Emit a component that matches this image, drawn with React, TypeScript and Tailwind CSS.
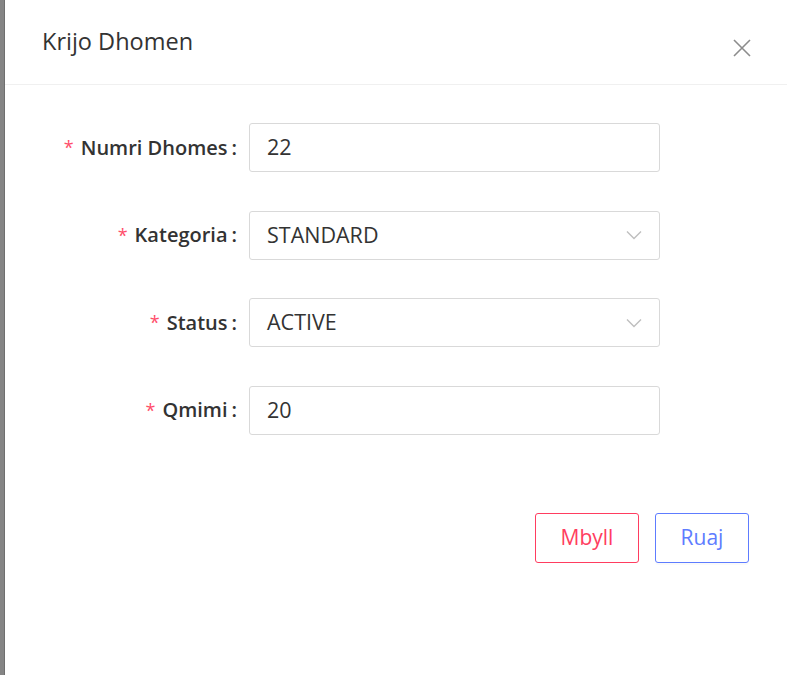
import React, { FC } from 'react';

type Field = {
  label: string;
  value: string;
  select?: boolean;
};

const fields: Field[] = [
  { label: 'Numri Dhomes', value: '22' },
  { label: 'Kategoria', value: 'STANDARD', select: true },
  { label: 'Status', value: 'ACTIVE', select: true },
  { label: 'Qmimi', value: '20' },
];

const Chevron: FC = () => (
  <svg width="16" height="10" viewBox="0 0 16 10" fill="none" className="text-[#bfbfbf]">
    <path d="M1 1.5 L8 8.5 L15 1.5" stroke="currentColor" strokeWidth="1.4" />
  </svg>
);

const CloseIcon: FC = () => (
  <svg width="20" height="20" viewBox="0 0 20 20" fill="none" className="text-[#8c8c8c]">
    <path d="M2 2 L18 18 M18 2 L2 18" stroke="currentColor" strokeWidth="1.6" />
  </svg>
);

const App: FC = () => {
  return (
    <div className="flex h-[675px] w-[787px] overflow-hidden bg-white font-['Open_Sans','Noto_Sans',sans-serif]">
      <div className="w-[5px] shrink-0 border-r border-[#6f6f6f] bg-[#858585]" />
      <div className="flex flex-1 flex-col bg-white">
        <div className="flex h-[85px] items-center justify-between border-b border-[#f0f0f0] pl-[37px] pr-[35px]">
          <h2 className="text-[23.5px] text-[#333]">Krijo Dhomen</h2>
          <button className="mt-[12px]">
            <CloseIcon />
          </button>
        </div>

        <div className="flex flex-col gap-[38.5px] pt-[38px]">
          {fields.map((field) => (
            <div key={field.label} className="flex h-[49px] items-center">
              <label className="flex w-[244px] shrink-0 items-center justify-end pr-[12px] text-[20px] font-semibold text-[#333]">
                <span className="mr-[7px] text-[18px] font-normal text-[#ff4d6a]">*</span>
                {field.label}
                <span className="ml-[4px]">:</span>
              </label>
              <div className="flex h-[49px] w-[411px] items-center justify-between rounded-[3px] border border-[#d9d9d9] pl-[17px] pr-[17px] text-[21.5px] text-[#333]">
                <span>{field.value}</span>
                {field.select && <Chevron />}
              </div>
            </div>
          ))}
        </div>

        <div className="mt-[78px] flex justify-end gap-[16px] pr-[38px]">
          <button className="h-[50px] w-[104px] rounded-[3px] border border-[#ff3d60] text-[21px] text-[#ff3d60]">
            Mbyll
          </button>
          <button className="h-[50px] w-[94px] rounded-[3px] border border-[#5e7cff] text-[21px] text-[#5e7cff] shadow-[0_2px_0_rgba(0,0,0,0.02)]">
            Ruaj
          </button>
        </div>
      </div>
    </div>
  );
};

export default App;
